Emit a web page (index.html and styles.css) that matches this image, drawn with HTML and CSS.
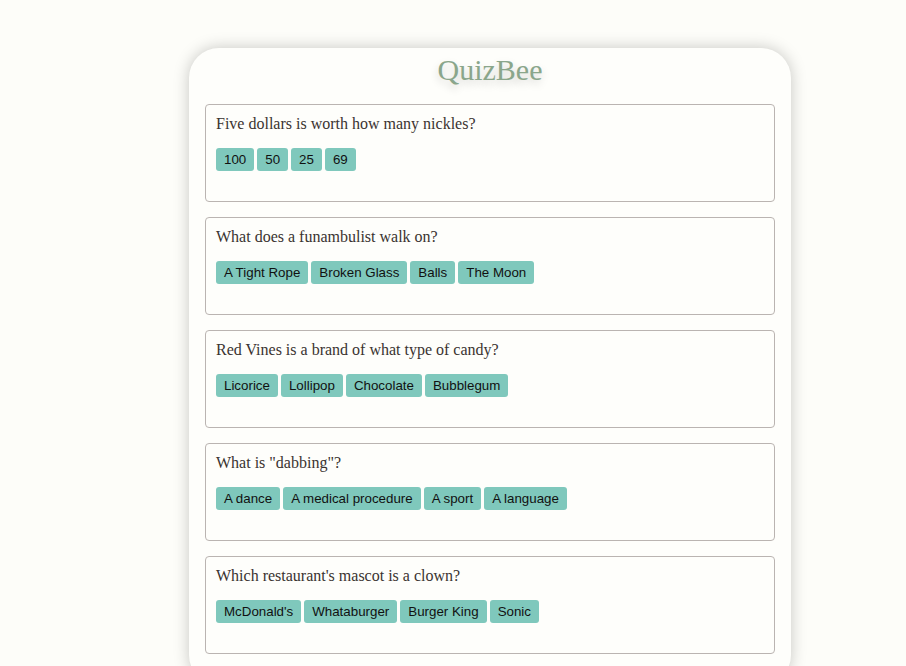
FILE: index.html
```html
<!DOCTYPE html>
<html>
<head>
<meta charset="utf-8">
<link rel="stylesheet" href="styles.css">
</head>
<body>
<div class="card">
  <h1 class="title">QuizBee</h1>
  <div class="question">
    <p class="q-text">Five dollars is worth how many nickles?</p>
    <div class="answers"><button class="ans">100</button> <button class="ans">50</button> <button class="ans">25</button> <button class="ans">69</button></div>
  </div>
  <div class="question">
    <p class="q-text">What does a funambulist walk on?</p>
    <div class="answers"><button class="ans">A Tight Rope</button> <button class="ans">Broken Glass</button> <button class="ans">Balls</button> <button class="ans">The Moon</button></div>
  </div>
  <div class="question">
    <p class="q-text">Red Vines is a brand of what type of candy?</p>
    <div class="answers"><button class="ans">Licorice</button> <button class="ans">Lollipop</button> <button class="ans">Chocolate</button> <button class="ans">Bubblegum</button></div>
  </div>
  <div class="question">
    <p class="q-text">What is "dabbing"?</p>
    <div class="answers"><button class="ans">A dance</button> <button class="ans">A medical procedure</button> <button class="ans">A sport</button> <button class="ans">A language</button></div>
  </div>
  <div class="question">
    <p class="q-text">Which restaurant's mascot is a clown?</p>
    <div class="answers"><button class="ans">McDonald's</button> <button class="ans">Whataburger</button> <button class="ans">Burger King</button> <button class="ans">Sonic</button></div>
  </div>
</div>
</body>
</html>
```

FILE: styles.css
```css
html, body {
  margin: 0;
  padding: 0;
  background: #fdfdf9;
}
body {
  font-family: "Liberation Serif", "Times New Roman", serif;
  color: #333;
}
.card {
  width: 570px;
  margin: 48px 0 0 189px;
  padding: 5px 16px 16px;
  background: #fefefb;
  border-radius: 30px;
  box-shadow: 0 0 16px rgba(0, 0, 0, 0.22);
}
.title {
  margin: 0 0 18px;
  font-size: 30px;
  font-weight: normal;
  line-height: 33px;
  text-align: center;
  color: #8aa68b;
  text-shadow: 0 4px 8px rgba(0, 0, 0, 0.18);
}
.question {
  border: 1px solid #bab4b1;
  border-radius: 4px;
  padding: 9px 10px 30px;
  margin-bottom: 15px;
}
.q-text {
  margin: 0;
  font-size: 16px;
  line-height: 19px;
  color: #3a3330;
}
.answers {
  margin-top: 15px;
  height: 23px;
  font-size: 0;
}
.ans {
  vertical-align: top;
  font-family: "Liberation Sans", Arial, sans-serif;
  font-size: 13.333px;
  line-height: 15px;
  height: 23px;
  padding: 4px 8px;
  margin: 0 3px 0 0;
  border: none;
  border-radius: 3px;
  background: #7fc8bc;
  color: #111;
}
```
